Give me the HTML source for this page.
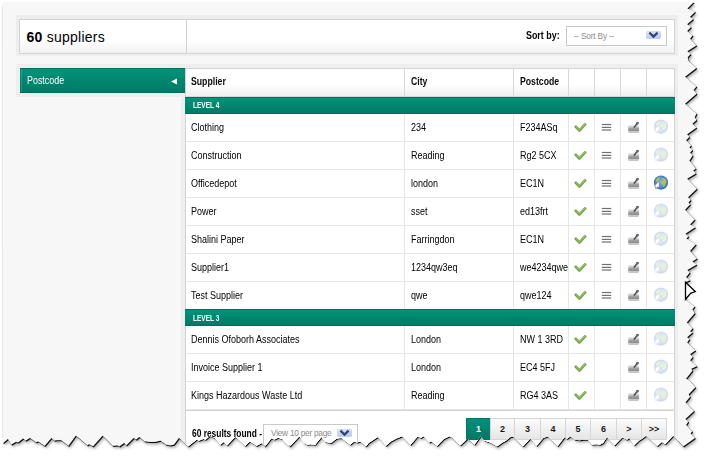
<!DOCTYPE html>
<html><head><meta charset="utf-8">
<style>
*{margin:0;padding:0;box-sizing:border-box}
html,body{width:707px;height:457px;overflow:hidden;background:#fff;font-family:"Liberation Sans",sans-serif;color:#111}
.abs{position:absolute}
#bg{position:absolute;left:0;top:0}
#clip{position:absolute;left:0;top:0;width:707px;height:457px;clip-path:path('M2,4 L4,2 L694,2 L687.5,8.5 L695.4,11.8 L690,17 L693.4,19 L687.3,24.3 L691.2,27 L687.3,31 L692.8,35.5 L690.2,38.8 L696.5,45.4 L687.5,51.3 L690.8,54 L687.8,57.2 L688.8,61 L696.5,68 L685.2,76.7 L696.5,86.6 L693.8,89.9 L696.7,93.8 L685.2,103.7 L696.7,113.5 L694.8,117.2 L696.7,120 L692.5,123.8 L696.5,127.8 L687.3,134.3 L689.5,137 L686.2,140.3 L691.2,145.5 L689.5,147.5 L692.5,150 L690.2,152.8 L692.8,155.4 L689.5,160.7 L693.4,165.3 L696,169 L693.4,170.3 L696,173.6 L687.3,178.8 L697,188.7 L688.2,197.2 L690.8,199.9 L688.6,202.5 L690.2,204.5 L685.2,209.7 L694.8,219.6 L690.2,224.6 L695.4,227.2 L685.6,233.8 L688.6,236.4 L686.5,238.4 L696,244.3 L690.2,250.9 L697,258.8 L692.5,261.4 L696.7,264.7 L687.5,270 L689.9,272.6 L686.2,277.2 L690.2,280.3 L685.5,282.2 L685.5,299.5 L694.8,306.6 L692.5,309.2 L694.8,313.2 L686.9,322.4 L692.8,328.3 L690.2,331.6 L692.8,332.5 L687.3,337.2 L689.5,339.2 L687.3,342.5 L695.4,350.4 L690.2,354.3 L693,357 L690.2,360.3 L697,366.2 L691.5,368.8 L692.5,370.8 L686.2,378.7 L689.9,380.7 L695.5,387.3 L688.7,394.4 L690.3,396.8 L685.6,402.3 L694.2,411 L685.6,418.9 L688.4,421.7 L686.2,425.1 L692.4,431.3 L690.7,433.6 L695.2,438.1 L683.3,446.6 L673.2,435.8 L665.2,444.3 L661.9,442.1 L657.3,446 L646,435.8 L642.1,438.7 L639.2,440.4 L634.1,445.5 L629.6,438.1 L626.8,439.8 L622.4,437.2 L614.5,445.4 L607.1,436.9 L603.2,443.1 L599.8,444.8 L596.4,444.2 L591.9,444.8 L587.9,439.7 L583.9,439.7 L579.4,440.3 L574.9,439.7 L570.4,436.3 L567,439.1 L564.7,436.9 L557.7,446.2 L547.9,436.3 L543.3,438 L536.6,445.9 L530.3,438.6 L523,446.5 L515.1,438.6 L513.4,436.9 L510.5,436.9 L506,440.8 L502.6,442.5 L497,446.5 L490.2,442.5 L484.5,440.8 L480.5,436.3 L474.5,444.8 L467.7,438.6 L460.3,445.4 L451.9,437.4 L449.6,436.3 L443.9,439.1 L437.1,445.9 L431.5,441.4 L429.2,442.5 L423.6,436.3 L420.7,438 L417.9,436.3 L410.5,445.1 L402.2,436.3 L396.6,438.6 L390.9,441.4 L385.8,445.9 L381.3,440.3 L377.9,436.9 L368.8,443.1 L366,446.5 L360.4,441.4 L357,442.5 L354.1,441.4 L350.2,444.8 L341.5,438 L336.7,438.6 L331.1,443.1 L328.8,442.5 L325.4,442 L321.5,436.9 L315.2,444.8 L310.7,444.2 L307.3,444.8 L303.9,443.1 L299.4,436.3 L289.8,446.5 L284.7,442 L282.4,439.1 L278,437.8 L274.7,439.4 L271.3,438.6 L265,446.5 L261.7,443.1 L256.6,445.9 L249.8,441.4 L245.2,445.9 L236.8,438 L235.1,436.9 L227.1,445.4 L223.8,442 L220.4,444.8 L214.7,438 L209.8,435.9 L205.6,439.7 L203.3,439.1 L198.8,440.8 L196.6,439.7 L188.1,446.5 L179,438 L174,444.8 L170,445.4 L166,444.8 L160.4,440.8 L155.3,442 L150.2,442 L144.5,441.6 L139.4,436.9 L136,439.7 L133.7,438 L126.4,445.4 L124.1,443.1 L119.6,446.5 L117.3,445.4 L112.8,445.9 L102.6,435.7 L93,446.5 L89,444.2 L87.4,445.4 L80,439.1 L75.8,435.7 L68.4,445.9 L61.1,440.3 L57.1,440.3 L54.3,440.8 L51.5,438 L44.7,445.9 L37.9,441.4 L36.2,442.5 L30,438 L25.5,440.8 L23.2,438.6 L18.1,442.5 L15.8,442 L11.3,444.8 L7.9,439.1 L3.4,443.1 L2.8,443.1 Z')}
.band{position:absolute;background:#eeeeee}
.box{position:absolute;background:linear-gradient(#fff 0%,#fff 60%,#f1f1f1 100%);border:1px solid #d3d3d3}
.green{position:absolute;background:linear-gradient(#00937a,#007a66);border-top:1px solid #00705d;border-bottom:1px solid #006d5a}
.t{position:absolute;font-size:10px;line-height:12px;white-space:nowrap;color:#000;transform:scaleX(0.9);transform-origin:0 0}
.th{position:absolute;font-size:10px;line-height:12px;font-weight:bold;white-space:nowrap;color:#0a0a0a;transform:scaleX(0.87);transform-origin:0 0}
.row{position:absolute;left:186px;width:488px;height:28px;border-bottom:1px solid #e6e6e6}
.vl{position:absolute;width:1px;background:#e6e6e6}
.ic{position:absolute}
.lv{position:absolute;left:192.5px;font-size:8.5px;line-height:10px;font-weight:bold;color:#fff;transform:scaleX(0.77);transform-origin:0 0;white-space:nowrap}
.pg{position:absolute;top:418px;height:22px;border:1px solid #d6d6d6;background:linear-gradient(#fbfbfb,#e6e6e6);font-size:9px;font-weight:bold;text-align:center;line-height:20px;color:#1a1a1a}
</style></head><body>
<svg id="bg" width="707" height="457">
<defs><filter id="sh" x="-5%" y="-5%" width="110%" height="110%"><feGaussianBlur stdDeviation="0.6"/></filter><filter id="sh2" x="-5%" y="-5%" width="110%" height="110%"><feGaussianBlur stdDeviation="1.6"/></filter></defs>
<path d="M2,4 L4,2 L694,2 L687.5,8.5 L695.4,11.8 L690,17 L693.4,19 L687.3,24.3 L691.2,27 L687.3,31 L692.8,35.5 L690.2,38.8 L696.5,45.4 L687.5,51.3 L690.8,54 L687.8,57.2 L688.8,61 L696.5,68 L685.2,76.7 L696.5,86.6 L693.8,89.9 L696.7,93.8 L685.2,103.7 L696.7,113.5 L694.8,117.2 L696.7,120 L692.5,123.8 L696.5,127.8 L687.3,134.3 L689.5,137 L686.2,140.3 L691.2,145.5 L689.5,147.5 L692.5,150 L690.2,152.8 L692.8,155.4 L689.5,160.7 L693.4,165.3 L696,169 L693.4,170.3 L696,173.6 L687.3,178.8 L697,188.7 L688.2,197.2 L690.8,199.9 L688.6,202.5 L690.2,204.5 L685.2,209.7 L694.8,219.6 L690.2,224.6 L695.4,227.2 L685.6,233.8 L688.6,236.4 L686.5,238.4 L696,244.3 L690.2,250.9 L697,258.8 L692.5,261.4 L696.7,264.7 L687.5,270 L689.9,272.6 L686.2,277.2 L690.2,280.3 L685.5,282.2 L685.5,299.5 L694.8,306.6 L692.5,309.2 L694.8,313.2 L686.9,322.4 L692.8,328.3 L690.2,331.6 L692.8,332.5 L687.3,337.2 L689.5,339.2 L687.3,342.5 L695.4,350.4 L690.2,354.3 L693,357 L690.2,360.3 L697,366.2 L691.5,368.8 L692.5,370.8 L686.2,378.7 L689.9,380.7 L695.5,387.3 L688.7,394.4 L690.3,396.8 L685.6,402.3 L694.2,411 L685.6,418.9 L688.4,421.7 L686.2,425.1 L692.4,431.3 L690.7,433.6 L695.2,438.1 L683.3,446.6 L673.2,435.8 L665.2,444.3 L661.9,442.1 L657.3,446 L646,435.8 L642.1,438.7 L639.2,440.4 L634.1,445.5 L629.6,438.1 L626.8,439.8 L622.4,437.2 L614.5,445.4 L607.1,436.9 L603.2,443.1 L599.8,444.8 L596.4,444.2 L591.9,444.8 L587.9,439.7 L583.9,439.7 L579.4,440.3 L574.9,439.7 L570.4,436.3 L567,439.1 L564.7,436.9 L557.7,446.2 L547.9,436.3 L543.3,438 L536.6,445.9 L530.3,438.6 L523,446.5 L515.1,438.6 L513.4,436.9 L510.5,436.9 L506,440.8 L502.6,442.5 L497,446.5 L490.2,442.5 L484.5,440.8 L480.5,436.3 L474.5,444.8 L467.7,438.6 L460.3,445.4 L451.9,437.4 L449.6,436.3 L443.9,439.1 L437.1,445.9 L431.5,441.4 L429.2,442.5 L423.6,436.3 L420.7,438 L417.9,436.3 L410.5,445.1 L402.2,436.3 L396.6,438.6 L390.9,441.4 L385.8,445.9 L381.3,440.3 L377.9,436.9 L368.8,443.1 L366,446.5 L360.4,441.4 L357,442.5 L354.1,441.4 L350.2,444.8 L341.5,438 L336.7,438.6 L331.1,443.1 L328.8,442.5 L325.4,442 L321.5,436.9 L315.2,444.8 L310.7,444.2 L307.3,444.8 L303.9,443.1 L299.4,436.3 L289.8,446.5 L284.7,442 L282.4,439.1 L278,437.8 L274.7,439.4 L271.3,438.6 L265,446.5 L261.7,443.1 L256.6,445.9 L249.8,441.4 L245.2,445.9 L236.8,438 L235.1,436.9 L227.1,445.4 L223.8,442 L220.4,444.8 L214.7,438 L209.8,435.9 L205.6,439.7 L203.3,439.1 L198.8,440.8 L196.6,439.7 L188.1,446.5 L179,438 L174,444.8 L170,445.4 L166,444.8 L160.4,440.8 L155.3,442 L150.2,442 L144.5,441.6 L139.4,436.9 L136,439.7 L133.7,438 L126.4,445.4 L124.1,443.1 L119.6,446.5 L117.3,445.4 L112.8,445.9 L102.6,435.7 L93,446.5 L89,444.2 L87.4,445.4 L80,439.1 L75.8,435.7 L68.4,445.9 L61.1,440.3 L57.1,440.3 L54.3,440.8 L51.5,438 L44.7,445.9 L37.9,441.4 L36.2,442.5 L30,438 L25.5,440.8 L23.2,438.6 L18.1,442.5 L15.8,442 L11.3,444.8 L7.9,439.1 L3.4,443.1 L2.8,443.1 Z" transform="translate(1.8,2.4)" fill="#000" fill-opacity="0.35" filter="url(#sh2)"/>
<path d="M2,4 L4,2 L694,2 L687.5,8.5 L695.4,11.8 L690,17 L693.4,19 L687.3,24.3 L691.2,27 L687.3,31 L692.8,35.5 L690.2,38.8 L696.5,45.4 L687.5,51.3 L690.8,54 L687.8,57.2 L688.8,61 L696.5,68 L685.2,76.7 L696.5,86.6 L693.8,89.9 L696.7,93.8 L685.2,103.7 L696.7,113.5 L694.8,117.2 L696.7,120 L692.5,123.8 L696.5,127.8 L687.3,134.3 L689.5,137 L686.2,140.3 L691.2,145.5 L689.5,147.5 L692.5,150 L690.2,152.8 L692.8,155.4 L689.5,160.7 L693.4,165.3 L696,169 L693.4,170.3 L696,173.6 L687.3,178.8 L697,188.7 L688.2,197.2 L690.8,199.9 L688.6,202.5 L690.2,204.5 L685.2,209.7 L694.8,219.6 L690.2,224.6 L695.4,227.2 L685.6,233.8 L688.6,236.4 L686.5,238.4 L696,244.3 L690.2,250.9 L697,258.8 L692.5,261.4 L696.7,264.7 L687.5,270 L689.9,272.6 L686.2,277.2 L690.2,280.3 L685.5,282.2 L685.5,299.5 L694.8,306.6 L692.5,309.2 L694.8,313.2 L686.9,322.4 L692.8,328.3 L690.2,331.6 L692.8,332.5 L687.3,337.2 L689.5,339.2 L687.3,342.5 L695.4,350.4 L690.2,354.3 L693,357 L690.2,360.3 L697,366.2 L691.5,368.8 L692.5,370.8 L686.2,378.7 L689.9,380.7 L695.5,387.3 L688.7,394.4 L690.3,396.8 L685.6,402.3 L694.2,411 L685.6,418.9 L688.4,421.7 L686.2,425.1 L692.4,431.3 L690.7,433.6 L695.2,438.1 L683.3,446.6 L673.2,435.8 L665.2,444.3 L661.9,442.1 L657.3,446 L646,435.8 L642.1,438.7 L639.2,440.4 L634.1,445.5 L629.6,438.1 L626.8,439.8 L622.4,437.2 L614.5,445.4 L607.1,436.9 L603.2,443.1 L599.8,444.8 L596.4,444.2 L591.9,444.8 L587.9,439.7 L583.9,439.7 L579.4,440.3 L574.9,439.7 L570.4,436.3 L567,439.1 L564.7,436.9 L557.7,446.2 L547.9,436.3 L543.3,438 L536.6,445.9 L530.3,438.6 L523,446.5 L515.1,438.6 L513.4,436.9 L510.5,436.9 L506,440.8 L502.6,442.5 L497,446.5 L490.2,442.5 L484.5,440.8 L480.5,436.3 L474.5,444.8 L467.7,438.6 L460.3,445.4 L451.9,437.4 L449.6,436.3 L443.9,439.1 L437.1,445.9 L431.5,441.4 L429.2,442.5 L423.6,436.3 L420.7,438 L417.9,436.3 L410.5,445.1 L402.2,436.3 L396.6,438.6 L390.9,441.4 L385.8,445.9 L381.3,440.3 L377.9,436.9 L368.8,443.1 L366,446.5 L360.4,441.4 L357,442.5 L354.1,441.4 L350.2,444.8 L341.5,438 L336.7,438.6 L331.1,443.1 L328.8,442.5 L325.4,442 L321.5,436.9 L315.2,444.8 L310.7,444.2 L307.3,444.8 L303.9,443.1 L299.4,436.3 L289.8,446.5 L284.7,442 L282.4,439.1 L278,437.8 L274.7,439.4 L271.3,438.6 L265,446.5 L261.7,443.1 L256.6,445.9 L249.8,441.4 L245.2,445.9 L236.8,438 L235.1,436.9 L227.1,445.4 L223.8,442 L220.4,444.8 L214.7,438 L209.8,435.9 L205.6,439.7 L203.3,439.1 L198.8,440.8 L196.6,439.7 L188.1,446.5 L179,438 L174,444.8 L170,445.4 L166,444.8 L160.4,440.8 L155.3,442 L150.2,442 L144.5,441.6 L139.4,436.9 L136,439.7 L133.7,438 L126.4,445.4 L124.1,443.1 L119.6,446.5 L117.3,445.4 L112.8,445.9 L102.6,435.7 L93,446.5 L89,444.2 L87.4,445.4 L80,439.1 L75.8,435.7 L68.4,445.9 L61.1,440.3 L57.1,440.3 L54.3,440.8 L51.5,438 L44.7,445.9 L37.9,441.4 L36.2,442.5 L30,438 L25.5,440.8 L23.2,438.6 L18.1,442.5 L15.8,442 L11.3,444.8 L7.9,439.1 L3.4,443.1 L2.8,443.1 Z" transform="translate(0.8,1.0)" fill="#111" filter="url(#sh)"/>
<path d="M2,4 L4,2 L694,2 L687.5,8.5 L695.4,11.8 L690,17 L693.4,19 L687.3,24.3 L691.2,27 L687.3,31 L692.8,35.5 L690.2,38.8 L696.5,45.4 L687.5,51.3 L690.8,54 L687.8,57.2 L688.8,61 L696.5,68 L685.2,76.7 L696.5,86.6 L693.8,89.9 L696.7,93.8 L685.2,103.7 L696.7,113.5 L694.8,117.2 L696.7,120 L692.5,123.8 L696.5,127.8 L687.3,134.3 L689.5,137 L686.2,140.3 L691.2,145.5 L689.5,147.5 L692.5,150 L690.2,152.8 L692.8,155.4 L689.5,160.7 L693.4,165.3 L696,169 L693.4,170.3 L696,173.6 L687.3,178.8 L697,188.7 L688.2,197.2 L690.8,199.9 L688.6,202.5 L690.2,204.5 L685.2,209.7 L694.8,219.6 L690.2,224.6 L695.4,227.2 L685.6,233.8 L688.6,236.4 L686.5,238.4 L696,244.3 L690.2,250.9 L697,258.8 L692.5,261.4 L696.7,264.7 L687.5,270 L689.9,272.6 L686.2,277.2 L690.2,280.3 L685.5,282.2 L685.5,299.5 L694.8,306.6 L692.5,309.2 L694.8,313.2 L686.9,322.4 L692.8,328.3 L690.2,331.6 L692.8,332.5 L687.3,337.2 L689.5,339.2 L687.3,342.5 L695.4,350.4 L690.2,354.3 L693,357 L690.2,360.3 L697,366.2 L691.5,368.8 L692.5,370.8 L686.2,378.7 L689.9,380.7 L695.5,387.3 L688.7,394.4 L690.3,396.8 L685.6,402.3 L694.2,411 L685.6,418.9 L688.4,421.7 L686.2,425.1 L692.4,431.3 L690.7,433.6 L695.2,438.1 L683.3,446.6 L673.2,435.8 L665.2,444.3 L661.9,442.1 L657.3,446 L646,435.8 L642.1,438.7 L639.2,440.4 L634.1,445.5 L629.6,438.1 L626.8,439.8 L622.4,437.2 L614.5,445.4 L607.1,436.9 L603.2,443.1 L599.8,444.8 L596.4,444.2 L591.9,444.8 L587.9,439.7 L583.9,439.7 L579.4,440.3 L574.9,439.7 L570.4,436.3 L567,439.1 L564.7,436.9 L557.7,446.2 L547.9,436.3 L543.3,438 L536.6,445.9 L530.3,438.6 L523,446.5 L515.1,438.6 L513.4,436.9 L510.5,436.9 L506,440.8 L502.6,442.5 L497,446.5 L490.2,442.5 L484.5,440.8 L480.5,436.3 L474.5,444.8 L467.7,438.6 L460.3,445.4 L451.9,437.4 L449.6,436.3 L443.9,439.1 L437.1,445.9 L431.5,441.4 L429.2,442.5 L423.6,436.3 L420.7,438 L417.9,436.3 L410.5,445.1 L402.2,436.3 L396.6,438.6 L390.9,441.4 L385.8,445.9 L381.3,440.3 L377.9,436.9 L368.8,443.1 L366,446.5 L360.4,441.4 L357,442.5 L354.1,441.4 L350.2,444.8 L341.5,438 L336.7,438.6 L331.1,443.1 L328.8,442.5 L325.4,442 L321.5,436.9 L315.2,444.8 L310.7,444.2 L307.3,444.8 L303.9,443.1 L299.4,436.3 L289.8,446.5 L284.7,442 L282.4,439.1 L278,437.8 L274.7,439.4 L271.3,438.6 L265,446.5 L261.7,443.1 L256.6,445.9 L249.8,441.4 L245.2,445.9 L236.8,438 L235.1,436.9 L227.1,445.4 L223.8,442 L220.4,444.8 L214.7,438 L209.8,435.9 L205.6,439.7 L203.3,439.1 L198.8,440.8 L196.6,439.7 L188.1,446.5 L179,438 L174,444.8 L170,445.4 L166,444.8 L160.4,440.8 L155.3,442 L150.2,442 L144.5,441.6 L139.4,436.9 L136,439.7 L133.7,438 L126.4,445.4 L124.1,443.1 L119.6,446.5 L117.3,445.4 L112.8,445.9 L102.6,435.7 L93,446.5 L89,444.2 L87.4,445.4 L80,439.1 L75.8,435.7 L68.4,445.9 L61.1,440.3 L57.1,440.3 L54.3,440.8 L51.5,438 L44.7,445.9 L37.9,441.4 L36.2,442.5 L30,438 L25.5,440.8 L23.2,438.6 L18.1,442.5 L15.8,442 L11.3,444.8 L7.9,439.1 L3.4,443.1 L2.8,443.1 Z" fill="#f7f7f7"/>
<path d="M694,2 L687.5,8.5 L695.4,11.8 L690,17 L693.4,19 L687.3,24.3 L691.2,27 L687.3,31 L692.8,35.5 L690.2,38.8 L696.5,45.4 L687.5,51.3 L690.8,54 L687.8,57.2 L688.8,61 L696.5,68 L685.2,76.7 L696.5,86.6 L693.8,89.9 L696.7,93.8 L685.2,103.7 L696.7,113.5 L694.8,117.2 L696.7,120 L692.5,123.8 L696.5,127.8 L687.3,134.3 L689.5,137 L686.2,140.3 L691.2,145.5 L689.5,147.5 L692.5,150 L690.2,152.8 L692.8,155.4 L689.5,160.7 L693.4,165.3 L696,169 L693.4,170.3 L696,173.6 L687.3,178.8 L697,188.7 L688.2,197.2 L690.8,199.9 L688.6,202.5 L690.2,204.5 L685.2,209.7 L694.8,219.6 L690.2,224.6 L695.4,227.2 L685.6,233.8 L688.6,236.4 L686.5,238.4 L696,244.3 L690.2,250.9 L697,258.8 L692.5,261.4 L696.7,264.7 L687.5,270 L689.9,272.6 L686.2,277.2 L690.2,280.3 L685.5,282.2 L685.5,299.5 L694.8,306.6 L692.5,309.2 L694.8,313.2 L686.9,322.4 L692.8,328.3 L690.2,331.6 L692.8,332.5 L687.3,337.2 L689.5,339.2 L687.3,342.5 L695.4,350.4 L690.2,354.3 L693,357 L690.2,360.3 L697,366.2 L691.5,368.8 L692.5,370.8 L686.2,378.7 L689.9,380.7 L695.5,387.3 L688.7,394.4 L690.3,396.8 L685.6,402.3 L694.2,411 L685.6,418.9 L688.4,421.7 L686.2,425.1 L692.4,431.3 L690.7,433.6 L695.2,438.1 L683.3,446.6 L673.2,435.8 L665.2,444.3 L661.9,442.1 L657.3,446 L646,435.8 L642.1,438.7 L639.2,440.4 L634.1,445.5 L629.6,438.1 L626.8,439.8 L622.4,437.2 L614.5,445.4 L607.1,436.9 L603.2,443.1 L599.8,444.8 L596.4,444.2 L591.9,444.8 L587.9,439.7 L583.9,439.7 L579.4,440.3 L574.9,439.7 L570.4,436.3 L567,439.1 L564.7,436.9 L557.7,446.2 L547.9,436.3 L543.3,438 L536.6,445.9 L530.3,438.6 L523,446.5 L515.1,438.6 L513.4,436.9 L510.5,436.9 L506,440.8 L502.6,442.5 L497,446.5 L490.2,442.5 L484.5,440.8 L480.5,436.3 L474.5,444.8 L467.7,438.6 L460.3,445.4 L451.9,437.4 L449.6,436.3 L443.9,439.1 L437.1,445.9 L431.5,441.4 L429.2,442.5 L423.6,436.3 L420.7,438 L417.9,436.3 L410.5,445.1 L402.2,436.3 L396.6,438.6 L390.9,441.4 L385.8,445.9 L381.3,440.3 L377.9,436.9 L368.8,443.1 L366,446.5 L360.4,441.4 L357,442.5 L354.1,441.4 L350.2,444.8 L341.5,438 L336.7,438.6 L331.1,443.1 L328.8,442.5 L325.4,442 L321.5,436.9 L315.2,444.8 L310.7,444.2 L307.3,444.8 L303.9,443.1 L299.4,436.3 L289.8,446.5 L284.7,442 L282.4,439.1 L278,437.8 L274.7,439.4 L271.3,438.6 L265,446.5 L261.7,443.1 L256.6,445.9 L249.8,441.4 L245.2,445.9 L236.8,438 L235.1,436.9 L227.1,445.4 L223.8,442 L220.4,444.8 L214.7,438 L209.8,435.9 L205.6,439.7 L203.3,439.1 L198.8,440.8 L196.6,439.7 L188.1,446.5 L179,438 L174,444.8 L170,445.4 L166,444.8 L160.4,440.8 L155.3,442 L150.2,442 L144.5,441.6 L139.4,436.9 L136,439.7 L133.7,438 L126.4,445.4 L124.1,443.1 L119.6,446.5 L117.3,445.4 L112.8,445.9 L102.6,435.7 L93,446.5 L89,444.2 L87.4,445.4 L80,439.1 L75.8,435.7 L68.4,445.9 L61.1,440.3 L57.1,440.3 L54.3,440.8 L51.5,438 L44.7,445.9 L37.9,441.4 L36.2,442.5 L30,438 L25.5,440.8 L23.2,438.6 L18.1,442.5 L15.8,442 L11.3,444.8 L7.9,439.1 L3.4,443.1 L2.8,443.1" fill="none" stroke="#000" stroke-opacity="0.18" stroke-width="0.6"/>
<rect x="2" y="6" width="1" height="432" fill="#e8e8e8"/>
</svg>
<svg width="0" height="0" style="position:absolute"><defs>
<linearGradient id="bgrad" x1="0" y1="0" x2="0.3" y2="1"><stop offset="0" stop-color="#e2ebfc"/><stop offset="1" stop-color="#b4c9f3"/></linearGradient>
<linearGradient id="egrad" x1="0" y1="0" x2="0" y2="1"><stop offset="0" stop-color="#e2e2e2"/><stop offset="0.3" stop-color="#c4c4c4"/><stop offset="0.45" stop-color="#a0a0a0"/><stop offset="0.75" stop-color="#8f8f8f"/><stop offset="0.86" stop-color="#d2d2d2"/><stop offset="1" stop-color="#a8a8a8"/></linearGradient>
<radialGradient id="gglobe" cx="0.5" cy="0.45" r="0.6"><stop offset="0" stop-color="#8ab9ec"/><stop offset="0.6" stop-color="#4f8bd2"/><stop offset="1" stop-color="#2a58a2"/></radialGradient>

</defs></svg>
<div id="clip">
  <div class="band" style="left:16px;top:15px;width:662px;height:41px"></div>
  <div class="box" style="left:19px;top:19px;width:656px;height:35px"></div>
  <div class="abs" style="left:186px;top:19px;width:1px;height:35px;background:#d3d3d3"></div>
  <div class="abs" style="left:26.5px;top:28px;font-size:14px;line-height:18px;letter-spacing:0.25px;white-space:nowrap;color:#000"><b>60</b> suppliers</div>
  <div class="abs" style="left:525.5px;top:29.5px;font-size:10px;line-height:12px;font-weight:bold;color:#000;white-space:nowrap;transform:scaleX(0.89);transform-origin:0 0">Sort by:</div>
  <div class="abs" style="left:566px;top:26px;width:101px;height:20px;border:1px solid #cacaca;background:#fff"></div>
  <div class="abs" style="left:573.8px;top:31px;font-size:8.3px;line-height:10px;letter-spacing:-0.2px;color:#8c8c8c;white-space:nowrap">-- Sort By --</div>
  <svg class="abs" style="left:646px;top:31px" width="15" height="8" viewBox="0 0 15 8"><rect x="0.3" y="0.3" width="14.4" height="7.4" rx="1.6" fill="url(#bgrad)" stroke="#b3c7f0" stroke-width="0.6"/><path d="M3.4,1.6 L7.5,5.6 L11.6,1.6" fill="none" stroke="#33466d" stroke-width="2.3"/></svg>

  <div class="band" style="left:181px;top:64px;width:497px;height:400px"></div>
  <div class="abs" style="left:185px;top:68px;width:490px;height:400px;background:#fff;border:1px solid #d3d3d3"></div>
  <div class="abs" style="left:186px;top:69px;width:488px;height:28px;background:linear-gradient(#fff 0%,#fff 55%,#efefef 100%);border-bottom:1px solid #d8d8d8"></div>
  <div class="abs" style="left:404px;top:69px;width:1px;height:28px;background:#d8d8d8"></div><div class="abs" style="left:513px;top:69px;width:1px;height:28px;background:#d8d8d8"></div><div class="abs" style="left:568px;top:69px;width:1px;height:28px;background:#d8d8d8"></div><div class="abs" style="left:594px;top:69px;width:1px;height:28px;background:#d8d8d8"></div><div class="abs" style="left:620px;top:69px;width:1px;height:28px;background:#d8d8d8"></div><div class="abs" style="left:646px;top:69px;width:1px;height:28px;background:#d8d8d8"></div>
  <div class="th" style="left:191.3px;top:76.3px">Supplier</div>
  <div class="th" style="left:411.3px;top:76.3px">City</div>
  <div class="th" style="left:520.3px;top:76.3px">Postcode</div>
  <div class="vl" style="left:404px;top:114px;height:195px"></div><div class="vl" style="left:404px;top:326px;height:84px"></div><div class="vl" style="left:513px;top:114px;height:195px"></div><div class="vl" style="left:513px;top:326px;height:84px"></div><div class="vl" style="left:568px;top:114px;height:195px"></div><div class="vl" style="left:568px;top:326px;height:84px"></div><div class="vl" style="left:594px;top:114px;height:195px"></div><div class="vl" style="left:594px;top:326px;height:84px"></div><div class="vl" style="left:620px;top:114px;height:195px"></div><div class="vl" style="left:620px;top:326px;height:84px"></div><div class="vl" style="left:646px;top:114px;height:195px"></div><div class="vl" style="left:646px;top:326px;height:84px"></div>
  <div class="green" style="left:185px;top:97px;width:490px;height:17px"></div>
  <div class="lv" style="top:99.8px">LEVEL 4</div>
  <div class="row" style="top:114px"></div><div class="t" style="left:191px;top:121.6px">Clothing</div><div class="t" style="left:411px;top:121.6px">234</div><div class="t" style="left:520px;top:121.6px">F234ASq</div><svg class="ic" style="left:571px;top:120px" width="16" height="14" viewBox="0 0 16 14"><path d="M4.8,6.7 L8.5,10.4 L14.1,4.4" fill="none" stroke="#72a548" stroke-width="2.8" stroke-linecap="round" stroke-linejoin="round"/><path d="M5,6.5 L8.5,9.9 L13.9,4.2" fill="none" stroke="#b8da92" stroke-width="0.9" stroke-linecap="round" stroke-linejoin="round" opacity="0.75"/></svg><svg class="ic" style="left:601px;top:122.8px" width="11" height="8" viewBox="0 0 11 8"><rect x="0.8" y="0.9" width="9.4" height="1.2" fill="#707070"/><rect x="0.8" y="3.8" width="9.4" height="1.2" fill="#707070"/><rect x="0.8" y="6.4" width="9.4" height="1.2" fill="#707070"/></svg><svg class="ic" style="left:627px;top:121px" width="13" height="13" viewBox="0 0 13 13"><path d="M1.2,6 Q1.2,4 3,4 H10.3 Q12.1,4 12.1,6 V10.2 Q12.1,11.7 10.6,11.7 H2.7 Q1.2,11.7 1.2,10.2 Z" fill="url(#egrad)"/><path d="M1.4,5 Q2,4.2 3,4.2 H10.3 Q11.3,4.2 11.9,5" fill="none" stroke="#f4f4f4" stroke-width="0.8"/><path d="M7.3,6.2 L9.9,2.6" stroke="#505050" stroke-width="1.6" stroke-linecap="round"/><path d="M9.2,2.5 Q9.9,1 11,1.4 Q11.8,2 11,2.9 L10.2,3.4" fill="none" stroke="#5a5a5a" stroke-width="1.1"/></svg><svg class="ic" style="left:653px;top:119px;opacity:0.25" width="16" height="16" viewBox="0 0 16 16"><circle cx="8" cy="7.6" r="7.1" fill="url(#gglobe)"/><path d="M3,4.4 Q4.4,2.4 6.6,2.2 Q7.6,2.8 6.8,3.6 Q5.6,4.2 6,5.8 Q5,7.2 3.8,6.6 Q2.8,5.8 3,4.4z" fill="#b4c63c"/><path d="M9,2.8 Q11.8,3 13.2,5.2 Q13.8,7.4 12.8,8.2 Q12,10.4 11,12 Q10.2,12 10,10.2 Q9.6,8.8 8.8,8.2 Q8.4,6.8 9.4,6.2 Q10.6,6.2 10.2,5 Q9.2,4.6 9,2.8z" fill="#b4c63c"/><path d="M5.9,6.1 L1.3,11 L2.5,11.4 L2.8,14 L4,13.6 L4.2,11.9 L6.4,12.4 Z" fill="#fff" stroke="#6a6a6a" stroke-width="0.55" stroke-linejoin="round"/></svg><div class="row" style="top:142px"></div><div class="t" style="left:191px;top:149.6px">Construction</div><div class="t" style="left:411px;top:149.6px">Reading</div><div class="t" style="left:520px;top:149.6px">Rg2 5CX</div><svg class="ic" style="left:571px;top:148px" width="16" height="14" viewBox="0 0 16 14"><path d="M4.8,6.7 L8.5,10.4 L14.1,4.4" fill="none" stroke="#72a548" stroke-width="2.8" stroke-linecap="round" stroke-linejoin="round"/><path d="M5,6.5 L8.5,9.9 L13.9,4.2" fill="none" stroke="#b8da92" stroke-width="0.9" stroke-linecap="round" stroke-linejoin="round" opacity="0.75"/></svg><svg class="ic" style="left:601px;top:150.8px" width="11" height="8" viewBox="0 0 11 8"><rect x="0.8" y="0.9" width="9.4" height="1.2" fill="#707070"/><rect x="0.8" y="3.8" width="9.4" height="1.2" fill="#707070"/><rect x="0.8" y="6.4" width="9.4" height="1.2" fill="#707070"/></svg><svg class="ic" style="left:627px;top:149px" width="13" height="13" viewBox="0 0 13 13"><path d="M1.2,6 Q1.2,4 3,4 H10.3 Q12.1,4 12.1,6 V10.2 Q12.1,11.7 10.6,11.7 H2.7 Q1.2,11.7 1.2,10.2 Z" fill="url(#egrad)"/><path d="M1.4,5 Q2,4.2 3,4.2 H10.3 Q11.3,4.2 11.9,5" fill="none" stroke="#f4f4f4" stroke-width="0.8"/><path d="M7.3,6.2 L9.9,2.6" stroke="#505050" stroke-width="1.6" stroke-linecap="round"/><path d="M9.2,2.5 Q9.9,1 11,1.4 Q11.8,2 11,2.9 L10.2,3.4" fill="none" stroke="#5a5a5a" stroke-width="1.1"/></svg><svg class="ic" style="left:653px;top:147px;opacity:0.25" width="16" height="16" viewBox="0 0 16 16"><circle cx="8" cy="7.6" r="7.1" fill="url(#gglobe)"/><path d="M3,4.4 Q4.4,2.4 6.6,2.2 Q7.6,2.8 6.8,3.6 Q5.6,4.2 6,5.8 Q5,7.2 3.8,6.6 Q2.8,5.8 3,4.4z" fill="#b4c63c"/><path d="M9,2.8 Q11.8,3 13.2,5.2 Q13.8,7.4 12.8,8.2 Q12,10.4 11,12 Q10.2,12 10,10.2 Q9.6,8.8 8.8,8.2 Q8.4,6.8 9.4,6.2 Q10.6,6.2 10.2,5 Q9.2,4.6 9,2.8z" fill="#b4c63c"/><path d="M5.9,6.1 L1.3,11 L2.5,11.4 L2.8,14 L4,13.6 L4.2,11.9 L6.4,12.4 Z" fill="#fff" stroke="#6a6a6a" stroke-width="0.55" stroke-linejoin="round"/></svg><div class="row" style="top:170px"></div><div class="t" style="left:191px;top:177.6px">Officedepot</div><div class="t" style="left:411px;top:177.6px">london</div><div class="t" style="left:520px;top:177.6px">EC1N</div><svg class="ic" style="left:571px;top:176px" width="16" height="14" viewBox="0 0 16 14"><path d="M4.8,6.7 L8.5,10.4 L14.1,4.4" fill="none" stroke="#72a548" stroke-width="2.8" stroke-linecap="round" stroke-linejoin="round"/><path d="M5,6.5 L8.5,9.9 L13.9,4.2" fill="none" stroke="#b8da92" stroke-width="0.9" stroke-linecap="round" stroke-linejoin="round" opacity="0.75"/></svg><svg class="ic" style="left:601px;top:178.8px" width="11" height="8" viewBox="0 0 11 8"><rect x="0.8" y="0.9" width="9.4" height="1.2" fill="#707070"/><rect x="0.8" y="3.8" width="9.4" height="1.2" fill="#707070"/><rect x="0.8" y="6.4" width="9.4" height="1.2" fill="#707070"/></svg><svg class="ic" style="left:627px;top:177px" width="13" height="13" viewBox="0 0 13 13"><path d="M1.2,6 Q1.2,4 3,4 H10.3 Q12.1,4 12.1,6 V10.2 Q12.1,11.7 10.6,11.7 H2.7 Q1.2,11.7 1.2,10.2 Z" fill="url(#egrad)"/><path d="M1.4,5 Q2,4.2 3,4.2 H10.3 Q11.3,4.2 11.9,5" fill="none" stroke="#f4f4f4" stroke-width="0.8"/><path d="M7.3,6.2 L9.9,2.6" stroke="#505050" stroke-width="1.6" stroke-linecap="round"/><path d="M9.2,2.5 Q9.9,1 11,1.4 Q11.8,2 11,2.9 L10.2,3.4" fill="none" stroke="#5a5a5a" stroke-width="1.1"/></svg><svg class="ic" style="left:653px;top:175px;opacity:1" width="16" height="16" viewBox="0 0 16 16"><circle cx="8" cy="7.6" r="7.1" fill="url(#gglobe)"/><path d="M3,4.4 Q4.4,2.4 6.6,2.2 Q7.6,2.8 6.8,3.6 Q5.6,4.2 6,5.8 Q5,7.2 3.8,6.6 Q2.8,5.8 3,4.4z" fill="#b4c63c"/><path d="M9,2.8 Q11.8,3 13.2,5.2 Q13.8,7.4 12.8,8.2 Q12,10.4 11,12 Q10.2,12 10,10.2 Q9.6,8.8 8.8,8.2 Q8.4,6.8 9.4,6.2 Q10.6,6.2 10.2,5 Q9.2,4.6 9,2.8z" fill="#b4c63c"/><path d="M5.9,6.1 L1.3,11 L2.5,11.4 L2.8,14 L4,13.6 L4.2,11.9 L6.4,12.4 Z" fill="#fff" stroke="#6a6a6a" stroke-width="0.55" stroke-linejoin="round"/></svg><div class="row" style="top:198px"></div><div class="t" style="left:191px;top:205.6px">Power</div><div class="t" style="left:411px;top:205.6px">sset</div><div class="t" style="left:520px;top:205.6px">ed13frt</div><svg class="ic" style="left:571px;top:204px" width="16" height="14" viewBox="0 0 16 14"><path d="M4.8,6.7 L8.5,10.4 L14.1,4.4" fill="none" stroke="#72a548" stroke-width="2.8" stroke-linecap="round" stroke-linejoin="round"/><path d="M5,6.5 L8.5,9.9 L13.9,4.2" fill="none" stroke="#b8da92" stroke-width="0.9" stroke-linecap="round" stroke-linejoin="round" opacity="0.75"/></svg><svg class="ic" style="left:601px;top:206.8px" width="11" height="8" viewBox="0 0 11 8"><rect x="0.8" y="0.9" width="9.4" height="1.2" fill="#707070"/><rect x="0.8" y="3.8" width="9.4" height="1.2" fill="#707070"/><rect x="0.8" y="6.4" width="9.4" height="1.2" fill="#707070"/></svg><svg class="ic" style="left:627px;top:205px" width="13" height="13" viewBox="0 0 13 13"><path d="M1.2,6 Q1.2,4 3,4 H10.3 Q12.1,4 12.1,6 V10.2 Q12.1,11.7 10.6,11.7 H2.7 Q1.2,11.7 1.2,10.2 Z" fill="url(#egrad)"/><path d="M1.4,5 Q2,4.2 3,4.2 H10.3 Q11.3,4.2 11.9,5" fill="none" stroke="#f4f4f4" stroke-width="0.8"/><path d="M7.3,6.2 L9.9,2.6" stroke="#505050" stroke-width="1.6" stroke-linecap="round"/><path d="M9.2,2.5 Q9.9,1 11,1.4 Q11.8,2 11,2.9 L10.2,3.4" fill="none" stroke="#5a5a5a" stroke-width="1.1"/></svg><svg class="ic" style="left:653px;top:203px;opacity:0.25" width="16" height="16" viewBox="0 0 16 16"><circle cx="8" cy="7.6" r="7.1" fill="url(#gglobe)"/><path d="M3,4.4 Q4.4,2.4 6.6,2.2 Q7.6,2.8 6.8,3.6 Q5.6,4.2 6,5.8 Q5,7.2 3.8,6.6 Q2.8,5.8 3,4.4z" fill="#b4c63c"/><path d="M9,2.8 Q11.8,3 13.2,5.2 Q13.8,7.4 12.8,8.2 Q12,10.4 11,12 Q10.2,12 10,10.2 Q9.6,8.8 8.8,8.2 Q8.4,6.8 9.4,6.2 Q10.6,6.2 10.2,5 Q9.2,4.6 9,2.8z" fill="#b4c63c"/><path d="M5.9,6.1 L1.3,11 L2.5,11.4 L2.8,14 L4,13.6 L4.2,11.9 L6.4,12.4 Z" fill="#fff" stroke="#6a6a6a" stroke-width="0.55" stroke-linejoin="round"/></svg><div class="row" style="top:226px"></div><div class="t" style="left:191px;top:233.6px">Shalini Paper</div><div class="t" style="left:411px;top:233.6px">Farringdon</div><div class="t" style="left:520px;top:233.6px">EC1N</div><svg class="ic" style="left:571px;top:232px" width="16" height="14" viewBox="0 0 16 14"><path d="M4.8,6.7 L8.5,10.4 L14.1,4.4" fill="none" stroke="#72a548" stroke-width="2.8" stroke-linecap="round" stroke-linejoin="round"/><path d="M5,6.5 L8.5,9.9 L13.9,4.2" fill="none" stroke="#b8da92" stroke-width="0.9" stroke-linecap="round" stroke-linejoin="round" opacity="0.75"/></svg><svg class="ic" style="left:601px;top:234.8px" width="11" height="8" viewBox="0 0 11 8"><rect x="0.8" y="0.9" width="9.4" height="1.2" fill="#707070"/><rect x="0.8" y="3.8" width="9.4" height="1.2" fill="#707070"/><rect x="0.8" y="6.4" width="9.4" height="1.2" fill="#707070"/></svg><svg class="ic" style="left:627px;top:233px" width="13" height="13" viewBox="0 0 13 13"><path d="M1.2,6 Q1.2,4 3,4 H10.3 Q12.1,4 12.1,6 V10.2 Q12.1,11.7 10.6,11.7 H2.7 Q1.2,11.7 1.2,10.2 Z" fill="url(#egrad)"/><path d="M1.4,5 Q2,4.2 3,4.2 H10.3 Q11.3,4.2 11.9,5" fill="none" stroke="#f4f4f4" stroke-width="0.8"/><path d="M7.3,6.2 L9.9,2.6" stroke="#505050" stroke-width="1.6" stroke-linecap="round"/><path d="M9.2,2.5 Q9.9,1 11,1.4 Q11.8,2 11,2.9 L10.2,3.4" fill="none" stroke="#5a5a5a" stroke-width="1.1"/></svg><svg class="ic" style="left:653px;top:231px;opacity:0.25" width="16" height="16" viewBox="0 0 16 16"><circle cx="8" cy="7.6" r="7.1" fill="url(#gglobe)"/><path d="M3,4.4 Q4.4,2.4 6.6,2.2 Q7.6,2.8 6.8,3.6 Q5.6,4.2 6,5.8 Q5,7.2 3.8,6.6 Q2.8,5.8 3,4.4z" fill="#b4c63c"/><path d="M9,2.8 Q11.8,3 13.2,5.2 Q13.8,7.4 12.8,8.2 Q12,10.4 11,12 Q10.2,12 10,10.2 Q9.6,8.8 8.8,8.2 Q8.4,6.8 9.4,6.2 Q10.6,6.2 10.2,5 Q9.2,4.6 9,2.8z" fill="#b4c63c"/><path d="M5.9,6.1 L1.3,11 L2.5,11.4 L2.8,14 L4,13.6 L4.2,11.9 L6.4,12.4 Z" fill="#fff" stroke="#6a6a6a" stroke-width="0.55" stroke-linejoin="round"/></svg><div class="row" style="top:254px"></div><div class="t" style="left:191px;top:261.6px">Supplier1</div><div class="t" style="left:411px;top:261.6px">1234qw3eq</div><div class="t" style="left:520px;top:261.6px">we4234qwe</div><svg class="ic" style="left:571px;top:260px" width="16" height="14" viewBox="0 0 16 14"><path d="M4.8,6.7 L8.5,10.4 L14.1,4.4" fill="none" stroke="#72a548" stroke-width="2.8" stroke-linecap="round" stroke-linejoin="round"/><path d="M5,6.5 L8.5,9.9 L13.9,4.2" fill="none" stroke="#b8da92" stroke-width="0.9" stroke-linecap="round" stroke-linejoin="round" opacity="0.75"/></svg><svg class="ic" style="left:601px;top:262.8px" width="11" height="8" viewBox="0 0 11 8"><rect x="0.8" y="0.9" width="9.4" height="1.2" fill="#707070"/><rect x="0.8" y="3.8" width="9.4" height="1.2" fill="#707070"/><rect x="0.8" y="6.4" width="9.4" height="1.2" fill="#707070"/></svg><svg class="ic" style="left:627px;top:261px" width="13" height="13" viewBox="0 0 13 13"><path d="M1.2,6 Q1.2,4 3,4 H10.3 Q12.1,4 12.1,6 V10.2 Q12.1,11.7 10.6,11.7 H2.7 Q1.2,11.7 1.2,10.2 Z" fill="url(#egrad)"/><path d="M1.4,5 Q2,4.2 3,4.2 H10.3 Q11.3,4.2 11.9,5" fill="none" stroke="#f4f4f4" stroke-width="0.8"/><path d="M7.3,6.2 L9.9,2.6" stroke="#505050" stroke-width="1.6" stroke-linecap="round"/><path d="M9.2,2.5 Q9.9,1 11,1.4 Q11.8,2 11,2.9 L10.2,3.4" fill="none" stroke="#5a5a5a" stroke-width="1.1"/></svg><svg class="ic" style="left:653px;top:259px;opacity:0.25" width="16" height="16" viewBox="0 0 16 16"><circle cx="8" cy="7.6" r="7.1" fill="url(#gglobe)"/><path d="M3,4.4 Q4.4,2.4 6.6,2.2 Q7.6,2.8 6.8,3.6 Q5.6,4.2 6,5.8 Q5,7.2 3.8,6.6 Q2.8,5.8 3,4.4z" fill="#b4c63c"/><path d="M9,2.8 Q11.8,3 13.2,5.2 Q13.8,7.4 12.8,8.2 Q12,10.4 11,12 Q10.2,12 10,10.2 Q9.6,8.8 8.8,8.2 Q8.4,6.8 9.4,6.2 Q10.6,6.2 10.2,5 Q9.2,4.6 9,2.8z" fill="#b4c63c"/><path d="M5.9,6.1 L1.3,11 L2.5,11.4 L2.8,14 L4,13.6 L4.2,11.9 L6.4,12.4 Z" fill="#fff" stroke="#6a6a6a" stroke-width="0.55" stroke-linejoin="round"/></svg><div class="row" style="top:282px"></div><div class="t" style="left:191px;top:289.6px">Test Supplier</div><div class="t" style="left:411px;top:289.6px">qwe</div><div class="t" style="left:520px;top:289.6px">qwe124</div><svg class="ic" style="left:571px;top:288px" width="16" height="14" viewBox="0 0 16 14"><path d="M4.8,6.7 L8.5,10.4 L14.1,4.4" fill="none" stroke="#72a548" stroke-width="2.8" stroke-linecap="round" stroke-linejoin="round"/><path d="M5,6.5 L8.5,9.9 L13.9,4.2" fill="none" stroke="#b8da92" stroke-width="0.9" stroke-linecap="round" stroke-linejoin="round" opacity="0.75"/></svg><svg class="ic" style="left:601px;top:290.8px" width="11" height="8" viewBox="0 0 11 8"><rect x="0.8" y="0.9" width="9.4" height="1.2" fill="#707070"/><rect x="0.8" y="3.8" width="9.4" height="1.2" fill="#707070"/><rect x="0.8" y="6.4" width="9.4" height="1.2" fill="#707070"/></svg><svg class="ic" style="left:627px;top:289px" width="13" height="13" viewBox="0 0 13 13"><path d="M1.2,6 Q1.2,4 3,4 H10.3 Q12.1,4 12.1,6 V10.2 Q12.1,11.7 10.6,11.7 H2.7 Q1.2,11.7 1.2,10.2 Z" fill="url(#egrad)"/><path d="M1.4,5 Q2,4.2 3,4.2 H10.3 Q11.3,4.2 11.9,5" fill="none" stroke="#f4f4f4" stroke-width="0.8"/><path d="M7.3,6.2 L9.9,2.6" stroke="#505050" stroke-width="1.6" stroke-linecap="round"/><path d="M9.2,2.5 Q9.9,1 11,1.4 Q11.8,2 11,2.9 L10.2,3.4" fill="none" stroke="#5a5a5a" stroke-width="1.1"/></svg><svg class="ic" style="left:653px;top:287px;opacity:0.25" width="16" height="16" viewBox="0 0 16 16"><circle cx="8" cy="7.6" r="7.1" fill="url(#gglobe)"/><path d="M3,4.4 Q4.4,2.4 6.6,2.2 Q7.6,2.8 6.8,3.6 Q5.6,4.2 6,5.8 Q5,7.2 3.8,6.6 Q2.8,5.8 3,4.4z" fill="#b4c63c"/><path d="M9,2.8 Q11.8,3 13.2,5.2 Q13.8,7.4 12.8,8.2 Q12,10.4 11,12 Q10.2,12 10,10.2 Q9.6,8.8 8.8,8.2 Q8.4,6.8 9.4,6.2 Q10.6,6.2 10.2,5 Q9.2,4.6 9,2.8z" fill="#b4c63c"/><path d="M5.9,6.1 L1.3,11 L2.5,11.4 L2.8,14 L4,13.6 L4.2,11.9 L6.4,12.4 Z" fill="#fff" stroke="#6a6a6a" stroke-width="0.55" stroke-linejoin="round"/></svg>
  <div class="green" style="left:185px;top:309px;width:490px;height:17px"></div>
  <div class="lv" style="top:312.8px">LEVEL 3</div>
  <div class="row" style="top:326px"></div><div class="t" style="left:191px;top:333.6px">Dennis Ofoborh Associates</div><div class="t" style="left:411px;top:333.6px">London</div><div class="t" style="left:520px;top:333.6px">NW 1 3RD</div><svg class="ic" style="left:571px;top:332px" width="16" height="14" viewBox="0 0 16 14"><path d="M4.8,6.7 L8.5,10.4 L14.1,4.4" fill="none" stroke="#72a548" stroke-width="2.8" stroke-linecap="round" stroke-linejoin="round"/><path d="M5,6.5 L8.5,9.9 L13.9,4.2" fill="none" stroke="#b8da92" stroke-width="0.9" stroke-linecap="round" stroke-linejoin="round" opacity="0.75"/></svg><svg class="ic" style="left:627px;top:333px" width="13" height="13" viewBox="0 0 13 13"><path d="M1.2,6 Q1.2,4 3,4 H10.3 Q12.1,4 12.1,6 V10.2 Q12.1,11.7 10.6,11.7 H2.7 Q1.2,11.7 1.2,10.2 Z" fill="url(#egrad)"/><path d="M1.4,5 Q2,4.2 3,4.2 H10.3 Q11.3,4.2 11.9,5" fill="none" stroke="#f4f4f4" stroke-width="0.8"/><path d="M7.3,6.2 L9.9,2.6" stroke="#505050" stroke-width="1.6" stroke-linecap="round"/><path d="M9.2,2.5 Q9.9,1 11,1.4 Q11.8,2 11,2.9 L10.2,3.4" fill="none" stroke="#5a5a5a" stroke-width="1.1"/></svg><svg class="ic" style="left:653px;top:331px;opacity:0.25" width="16" height="16" viewBox="0 0 16 16"><circle cx="8" cy="7.6" r="7.1" fill="url(#gglobe)"/><path d="M3,4.4 Q4.4,2.4 6.6,2.2 Q7.6,2.8 6.8,3.6 Q5.6,4.2 6,5.8 Q5,7.2 3.8,6.6 Q2.8,5.8 3,4.4z" fill="#b4c63c"/><path d="M9,2.8 Q11.8,3 13.2,5.2 Q13.8,7.4 12.8,8.2 Q12,10.4 11,12 Q10.2,12 10,10.2 Q9.6,8.8 8.8,8.2 Q8.4,6.8 9.4,6.2 Q10.6,6.2 10.2,5 Q9.2,4.6 9,2.8z" fill="#b4c63c"/><path d="M5.9,6.1 L1.3,11 L2.5,11.4 L2.8,14 L4,13.6 L4.2,11.9 L6.4,12.4 Z" fill="#fff" stroke="#6a6a6a" stroke-width="0.55" stroke-linejoin="round"/></svg><div class="row" style="top:354px"></div><div class="t" style="left:191px;top:361.6px">Invoice Supplier 1</div><div class="t" style="left:411px;top:361.6px">London</div><div class="t" style="left:520px;top:361.6px">EC4 5FJ</div><svg class="ic" style="left:571px;top:360px" width="16" height="14" viewBox="0 0 16 14"><path d="M4.8,6.7 L8.5,10.4 L14.1,4.4" fill="none" stroke="#72a548" stroke-width="2.8" stroke-linecap="round" stroke-linejoin="round"/><path d="M5,6.5 L8.5,9.9 L13.9,4.2" fill="none" stroke="#b8da92" stroke-width="0.9" stroke-linecap="round" stroke-linejoin="round" opacity="0.75"/></svg><svg class="ic" style="left:627px;top:361px" width="13" height="13" viewBox="0 0 13 13"><path d="M1.2,6 Q1.2,4 3,4 H10.3 Q12.1,4 12.1,6 V10.2 Q12.1,11.7 10.6,11.7 H2.7 Q1.2,11.7 1.2,10.2 Z" fill="url(#egrad)"/><path d="M1.4,5 Q2,4.2 3,4.2 H10.3 Q11.3,4.2 11.9,5" fill="none" stroke="#f4f4f4" stroke-width="0.8"/><path d="M7.3,6.2 L9.9,2.6" stroke="#505050" stroke-width="1.6" stroke-linecap="round"/><path d="M9.2,2.5 Q9.9,1 11,1.4 Q11.8,2 11,2.9 L10.2,3.4" fill="none" stroke="#5a5a5a" stroke-width="1.1"/></svg><svg class="ic" style="left:653px;top:359px;opacity:0.25" width="16" height="16" viewBox="0 0 16 16"><circle cx="8" cy="7.6" r="7.1" fill="url(#gglobe)"/><path d="M3,4.4 Q4.4,2.4 6.6,2.2 Q7.6,2.8 6.8,3.6 Q5.6,4.2 6,5.8 Q5,7.2 3.8,6.6 Q2.8,5.8 3,4.4z" fill="#b4c63c"/><path d="M9,2.8 Q11.8,3 13.2,5.2 Q13.8,7.4 12.8,8.2 Q12,10.4 11,12 Q10.2,12 10,10.2 Q9.6,8.8 8.8,8.2 Q8.4,6.8 9.4,6.2 Q10.6,6.2 10.2,5 Q9.2,4.6 9,2.8z" fill="#b4c63c"/><path d="M5.9,6.1 L1.3,11 L2.5,11.4 L2.8,14 L4,13.6 L4.2,11.9 L6.4,12.4 Z" fill="#fff" stroke="#6a6a6a" stroke-width="0.55" stroke-linejoin="round"/></svg><div class="row" style="top:382px"></div><div class="t" style="left:191px;top:389.6px">Kings Hazardous Waste Ltd</div><div class="t" style="left:411px;top:389.6px">Reading</div><div class="t" style="left:520px;top:389.6px">RG4 3AS</div><svg class="ic" style="left:571px;top:388px" width="16" height="14" viewBox="0 0 16 14"><path d="M4.8,6.7 L8.5,10.4 L14.1,4.4" fill="none" stroke="#72a548" stroke-width="2.8" stroke-linecap="round" stroke-linejoin="round"/><path d="M5,6.5 L8.5,9.9 L13.9,4.2" fill="none" stroke="#b8da92" stroke-width="0.9" stroke-linecap="round" stroke-linejoin="round" opacity="0.75"/></svg><svg class="ic" style="left:627px;top:389px" width="13" height="13" viewBox="0 0 13 13"><path d="M1.2,6 Q1.2,4 3,4 H10.3 Q12.1,4 12.1,6 V10.2 Q12.1,11.7 10.6,11.7 H2.7 Q1.2,11.7 1.2,10.2 Z" fill="url(#egrad)"/><path d="M1.4,5 Q2,4.2 3,4.2 H10.3 Q11.3,4.2 11.9,5" fill="none" stroke="#f4f4f4" stroke-width="0.8"/><path d="M7.3,6.2 L9.9,2.6" stroke="#505050" stroke-width="1.6" stroke-linecap="round"/><path d="M9.2,2.5 Q9.9,1 11,1.4 Q11.8,2 11,2.9 L10.2,3.4" fill="none" stroke="#5a5a5a" stroke-width="1.1"/></svg><svg class="ic" style="left:653px;top:387px;opacity:0.25" width="16" height="16" viewBox="0 0 16 16"><circle cx="8" cy="7.6" r="7.1" fill="url(#gglobe)"/><path d="M3,4.4 Q4.4,2.4 6.6,2.2 Q7.6,2.8 6.8,3.6 Q5.6,4.2 6,5.8 Q5,7.2 3.8,6.6 Q2.8,5.8 3,4.4z" fill="#b4c63c"/><path d="M9,2.8 Q11.8,3 13.2,5.2 Q13.8,7.4 12.8,8.2 Q12,10.4 11,12 Q10.2,12 10,10.2 Q9.6,8.8 8.8,8.2 Q8.4,6.8 9.4,6.2 Q10.6,6.2 10.2,5 Q9.2,4.6 9,2.8z" fill="#b4c63c"/><path d="M5.9,6.1 L1.3,11 L2.5,11.4 L2.8,14 L4,13.6 L4.2,11.9 L6.4,12.4 Z" fill="#fff" stroke="#6a6a6a" stroke-width="0.55" stroke-linejoin="round"/></svg>
  <div class="abs" style="left:186px;top:410px;width:488px;height:1px;background:#d3d3d3"></div>

  <div class="abs" style="left:191.5px;top:427.9px;font-size:10px;line-height:12px;font-weight:bold;white-space:nowrap;color:#000;transform:scaleX(0.84);transform-origin:0 0">60 results found -</div>
  <div class="abs" style="left:263px;top:424px;width:95px;height:22px;border:1px solid #cacaca;background:#fff"></div>
  <div class="abs" style="left:271px;top:428px;font-size:8.3px;line-height:10px;letter-spacing:-0.25px;color:#8c8c8c;white-space:nowrap">View 10 per page</div>
  <svg class="abs" style="left:337px;top:429px" width="15" height="8" viewBox="0 0 15 8"><rect x="0.3" y="0.3" width="14.4" height="7.4" rx="1.6" fill="url(#bgrad)" stroke="#b3c7f0" stroke-width="0.6"/><path d="M3.4,1.6 L7.5,5.6 L11.6,1.6" fill="none" stroke="#33466d" stroke-width="2.3"/></svg>
  <div class="pg" style="left:466px;width:25px;background:linear-gradient(#00907a,#007865);border-color:#007562;color:#fff;">1</div><div class="pg" style="left:490px;width:25px;">2</div><div class="pg" style="left:514px;width:27px;">3</div><div class="pg" style="left:540px;width:26px;">4</div><div class="pg" style="left:565px;width:26px;">5</div><div class="pg" style="left:590px;width:27px;">6</div><div class="pg" style="left:616px;width:26px;">&gt;</div><div class="pg" style="left:641px;width:26px;">&gt;&gt;</div>

  <div class="band" style="left:16px;top:64px;width:165px;height:33px"></div>
  <div class="green" style="left:20px;top:68px;width:165px;height:25px"></div>
  <div class="abs" style="left:21px;top:69px;width:1px;height:23px;background:rgba(255,255,255,0.13)"></div>
  <div class="abs" style="left:26.8px;top:74.5px;font-size:10px;line-height:12px;color:#fff;transform:scaleX(0.89);transform-origin:0 0">Postcode</div>
  <svg class="abs" style="left:170px;top:78px" width="8" height="7" viewBox="0 0 8 7"><path d="M1,3.5 L7,0.5 L7,6.5 Z" fill="#fff"/></svg>
</div>
<svg class="abs" style="left:0;top:0" width="707" height="457"><path d="M685.5,282.2 L695.3,291.6 L690.5,293.3 L689.4,294.8 L685.5,299.3 Z" fill="#fff" stroke="#000" stroke-width="1.3" stroke-linejoin="miter"/></svg>
</body></html>
